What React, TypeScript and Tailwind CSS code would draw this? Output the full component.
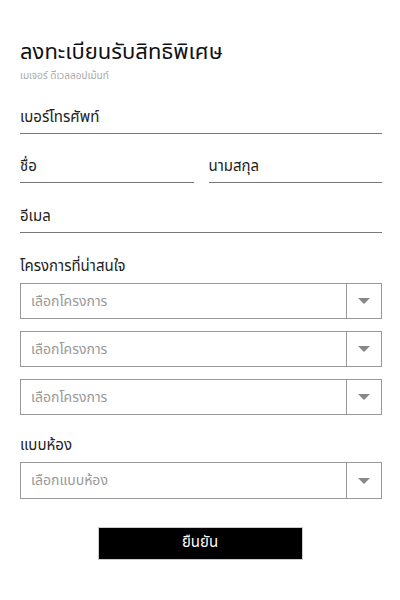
import React from "react";

function Field({ label, className = "" }: { label: string; className?: string }) {
  return (
    <div className={"border-b border-[#777] pb-[5px] " + className}>
      <div className="text-[15px] leading-[20px] text-[#222]">{label}</div>
    </div>
  );
}

function Select({ placeholder, tall = false }: { placeholder: string; tall?: boolean }) {
  return (
    <div className={"flex border border-[#999] " + (tall ? "h-[37px]" : "h-[36px]")}>
      <div className="flex flex-1 items-center pl-[10px] text-[14px] text-[#999]">{placeholder}</div>
      <div className="flex w-[35px] items-center justify-center border-l border-[#999]">
        <svg width="12" height="6" viewBox="0 0 12 6">
          <path d="M0 0 L12 0 L6 6 Z" fill="#888" />
        </svg>
      </div>
    </div>
  );
}

export default function App() {
  return (
    <div
      className="h-[600px] w-[400px] bg-white pl-5 pr-[18px] pt-[39px]"
      style={{ fontFamily: '"Noto Sans Thai", "Noto Sans", "Liberation Sans", sans-serif' }}
    >
      <h1 className="text-[22px] leading-[28px] text-[#111]">ลงทะเบียนรับสิทธิพิเศษ</h1>
      <div className="mt-[3px] text-[10px] leading-[12px] text-[#aaa]">เมเจอร์ ดีเวลลอปเม้นท์</div>

      <Field label="เบอร์โทรศัพท์" className="mt-[26px]" />
      <div className="mt-[23px] flex gap-[15px]">
        <Field label="ชื่อ" className="flex-1" />
        <Field label="นามสกุล" className="flex-1" />
      </div>
      <Field label="อีเมล" className="mt-[24px]" />

      <div className="mt-[24px] text-[15px] leading-[20px] text-[#222]">โครงการที่น่าสนใจ</div>
      <div className="mt-[6px] flex flex-col gap-[12px]">
        <Select placeholder="เลือกโครงการ" />
        <Select placeholder="เลือกโครงการ" />
        <Select placeholder="เลือกโครงการ" />
      </div>

      <div className="mt-[21px] text-[15px] leading-[20px] text-[#222]">แบบห้อง</div>
      <div className="mt-[6px]">
        <Select placeholder="เลือกแบบห้อง" tall />
      </div>

      <div className="mt-[28px] flex justify-center pr-[2px]">
        <button className="h-[33px] w-[205px] border border-[#ccc] bg-black text-[15px] text-white">
          ยืนยัน
        </button>
      </div>
    </div>
  );
}
